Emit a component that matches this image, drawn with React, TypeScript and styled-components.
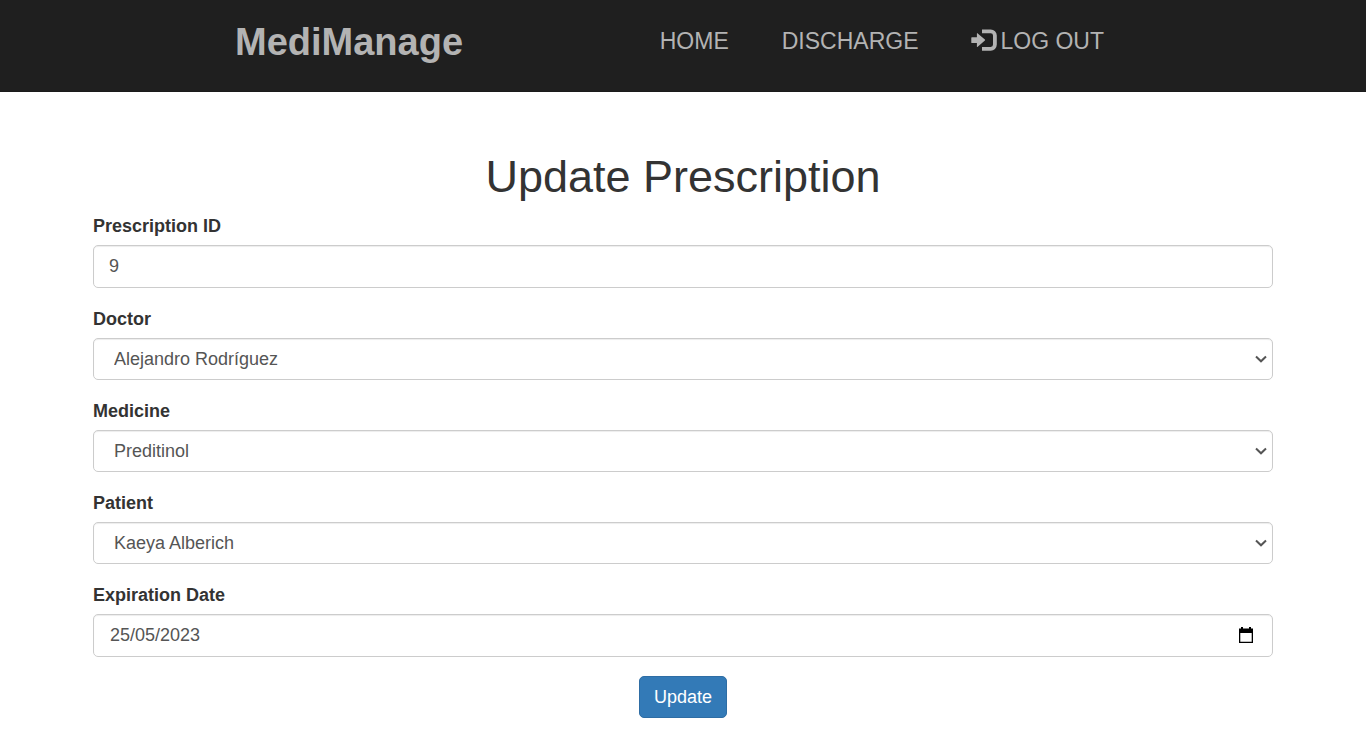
import React, { useState } from "react";
import styled, { createGlobalStyle, css } from "styled-components";

const GlobalStyle = createGlobalStyle`
  *, *::before, *::after { box-sizing: border-box; }
  body {
    margin: 0;
    background: #fff;
    color: #333;
    font-family: "Liberation Sans", Arial, sans-serif;
    font-size: 18px;
    line-height: 25px;
  }
`;

const Header = styled.header`
  background: #1f1f1f;
  border-bottom: 1px solid #1b1b1b;
  height: 92px;
  padding: 0 16px;
`;

const HeaderInner = styled.div`
  display: flex;
  align-items: flex-start;
  justify-content: space-between;
  max-width: 896px;
  margin: 0 auto;
  padding: 18px 27px 0 0;
`;

const Brand = styled.a`
  color: #b3b3b3;
  font-size: 38px;
  font-weight: 700;
  line-height: 48px;
  text-decoration: none;
`;

const NavList = styled.ul`
  display: flex;
  gap: 53px;
  margin: 0;
  padding: 7px 0 0;
  list-style: none;
`;

const NavLink = styled.a`
  display: flex;
  align-items: center;
  gap: 2px;
  color: #b3b3b3;
  font-size: 23px;
  line-height: 32px;
  text-decoration: none;
  white-space: nowrap;
`;

const Main = styled.main`
  max-width: 1212px;
  margin: 0 auto;
  padding: 60px 16px 36px;
`;

const Title = styled.h1`
  margin: 0 0 12px;
  font-size: 45px;
  font-weight: 400;
  line-height: 50px;
  text-align: center;
`;

const Field = styled.div`
  display: flex;
  flex-direction: column;
  gap: 6px;
  margin-bottom: 19px;
`;

const Label = styled.label`
  font-weight: 700;
  align-self: flex-start;
`;

const controlStyle = css`
  width: 100%;
  border: 1px solid #ccc;
  border-radius: 5px;
  background-color: #fff;
  box-shadow: inset 0 1px 1px rgba(0, 0, 0, 0.075);
  color: #555;
  font-family: inherit;
  font-size: 18px;
  line-height: 25px;
  padding: 7px 15px;

  &:focus {
    border-color: #66afe9;
    outline: 0;
  }
`;

const TextInput = styled.input`
  ${controlStyle}
  height: 43px;
`;

const SelectBox = styled.div`
  display: grid;
  align-items: center;

  > * { grid-area: 1 / 1; }
  > svg {
    justify-self: end;
    margin-right: 6px;
    pointer-events: none;
  }
`;

const Select = styled.select`
  ${controlStyle}
  appearance: none;
  height: 42px;
  padding: 7px 20px;
`;

const DateBox = styled.div`
  ${controlStyle}
  display: flex;
  align-items: center;
  height: 43px;
`;

const DateInput = styled.input`
  flex: 1;
  min-width: 0;
  border: 0;
  padding: 0 1px;
  background: transparent;
  color: inherit;
  font: inherit;
  outline: 0;
`;

const PickerButton = styled.button`
  display: flex;
  border: 0;
  padding: 3px;
  background: transparent;
  cursor: pointer;
`;

const Actions = styled.div`
  display: flex;
  justify-content: center;
`;

const SubmitButton = styled.button`
  height: 42px;
  border: 1px solid #2e6da4;
  border-radius: 5px;
  padding: 0 14px;
  background: #337ab7;
  color: #fff;
  font-family: inherit;
  font-size: 18px;
  line-height: 25px;
  cursor: pointer;
`;

const LogInIcon = () => (
  <svg width="27" height="24" viewBox="0 0 27 24" aria-hidden="true">
    <path d="M0.9 8.2H5.9V4.7q0-1 0.8-0.3L13.9 10.6q0.5 0.5 0 1L6.7 17.8q-0.8 0.7-0.8-0.3V14H0.9q-0.6 0-0.6-0.6V8.8q0-0.6 0.6-0.6z" fill="#b3b3b3" />
    <path d="M11 2.4H19.7a4.2 4.2 0 0 1 4.2 4.2V15.6a4.2 4.2 0 0 1-4.2 4.2H11" fill="none" stroke="#b3b3b3" strokeWidth="3.8" strokeLinecap="butt" />
  </svg>
);

const ChevronIcon = () => (
  <svg width="12" height="8" viewBox="0 0 12 8" aria-hidden="true">
    <path d="M1 1.5L6 6.3L11 1.5" fill="none" stroke="#555" strokeWidth="2" />
  </svg>
);

const CalendarIcon = () => (
  <svg width="16" height="17" viewBox="0 0 16 17" aria-hidden="true">
    <path d="M3 0h2v2H3zM11 0h2v2h-2z" fill="#000" />
    <path d="M1 1.5h14V16H1zM2.3 6v8.7h11.4V6z" fill="#000" fillRule="evenodd" />
  </svg>
);

type SelectFieldProps = { id: string; label: string; options: string[] };

const SelectField = ({ id, label, options }: SelectFieldProps) => (
  <Field>
    <Label htmlFor={id}>{label}</Label>
    <SelectBox>
      <Select id={id} name={id}>
        {options.map((option) => (
          <option key={option}>{option}</option>
        ))}
      </Select>
      <ChevronIcon />
    </SelectBox>
  </Field>
);

export default function App() {
  const [prescriptionId, setPrescriptionId] = useState("9");
  const [expiration, setExpiration] = useState("25/05/2023");

  return (
    <>
      <GlobalStyle />
      <Header>
        <HeaderInner>
          <Brand href="#">MediManage</Brand>
          <nav>
            <NavList>
              <li><NavLink href="#home">HOME</NavLink></li>
              <li><NavLink href="#discharge">DISCHARGE</NavLink></li>
              <li><NavLink href="#logout"><LogInIcon />LOG OUT</NavLink></li>
            </NavList>
          </nav>
        </HeaderInner>
      </Header>
      <Main>
        <Title>Update Prescription</Title>
        <form onSubmit={(event) => event.preventDefault()}>
          <Field>
            <Label htmlFor="prescription">Prescription ID</Label>
            <TextInput
              id="prescription"
              value={prescriptionId}
              onChange={(event) => setPrescriptionId(event.target.value)}
            />
          </Field>
          <SelectField id="doctor" label="Doctor" options={["Alejandro Rodríguez"]} />
          <SelectField id="medicine" label="Medicine" options={["Preditinol"]} />
          <SelectField id="patient" label="Patient" options={["Kaeya Alberich"]} />
          <Field>
            <Label htmlFor="expiration">Expiration Date</Label>
            <DateBox>
              <DateInput
                id="expiration"
                value={expiration}
                onChange={(event) => setExpiration(event.target.value)}
              />
              <PickerButton type="button" aria-label="Show date picker">
                <CalendarIcon />
              </PickerButton>
            </DateBox>
          </Field>
          <Actions>
            <SubmitButton type="submit">Update</SubmitButton>
          </Actions>
        </form>
      </Main>
    </>
  );
}
